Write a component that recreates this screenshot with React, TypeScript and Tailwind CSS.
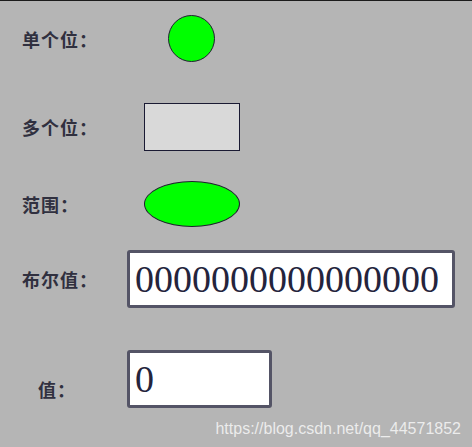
const labelCls =
  "text-[18px] tracking-[1px] font-bold text-[#30303f] leading-none [font-family:'Noto_Sans_CJK_SC',sans-serif]";

function Label({ text, className = "" }: { text: string; className?: string }) {
  return <span className={`${labelCls} ${className}`}>{text}</span>;
}

export default function App() {
  return (
    <div className="relative w-[472px] h-[447px] bg-[#b5b5b5] border-t border-[#1c1c1c] overflow-hidden">
      {/* 单个位 */}
      <div className="flex items-center h-[47px] mt-[14px]">
        <Label text="单个位：" className="ml-[22px] w-[146px]" />
        <div className="w-[47px] h-[47px] rounded-full bg-[#00ff00] border border-[#202030]" />
      </div>

      {/* 多个位 */}
      <div className="flex items-center h-[48px] mt-[41px]">
        <Label text="多个位：" className="ml-[22px] w-[122px]" />
        <div className="w-[96px] h-[48px] bg-[#d9d9d9] border border-[#1a1a33]" />
      </div>

      {/* 范围 */}
      <div className="flex items-center h-[46px] mt-[30px]">
        <Label text="范围：" className="ml-[22px] w-[122px]" />
        <div className="w-[96px] h-[46px] rounded-[50%] bg-[#00ff00] border border-[#202030]" />
      </div>

      {/* 布尔值 */}
      <div className="flex items-center h-[58px] mt-[23px]">
        <Label text="布尔值：" className="ml-[22px] w-[105px]" />
        <div className="w-[328px] h-[58px] bg-white border-[3px] border-[#545466] rounded-[3px] flex items-center pl-[5px] text-[38px] text-[#24243c] [font-family:'Liberation_Serif',serif]">
          0000000000000000
        </div>
      </div>

      {/* 值 */}
      <div className="flex items-center h-[58px] mt-[42px]">
        <Label text="值：" className="ml-[38px] w-[89px] pt-[20px]" />
        <div className="w-[145px] h-[58px] bg-white border-[3px] border-[#545466] rounded-[3px] flex items-center pl-[5px] text-[38px] text-[#24243c] [font-family:'Liberation_Serif',serif]">
          0
        </div>
      </div>

      <span className="absolute right-[11px] top-[416px] text-[16px] text-white/75 [font-family:'Liberation_Sans',sans-serif]">
        https://blog.csdn.net/qq_44571852
      </span>
    </div>
  );
}
